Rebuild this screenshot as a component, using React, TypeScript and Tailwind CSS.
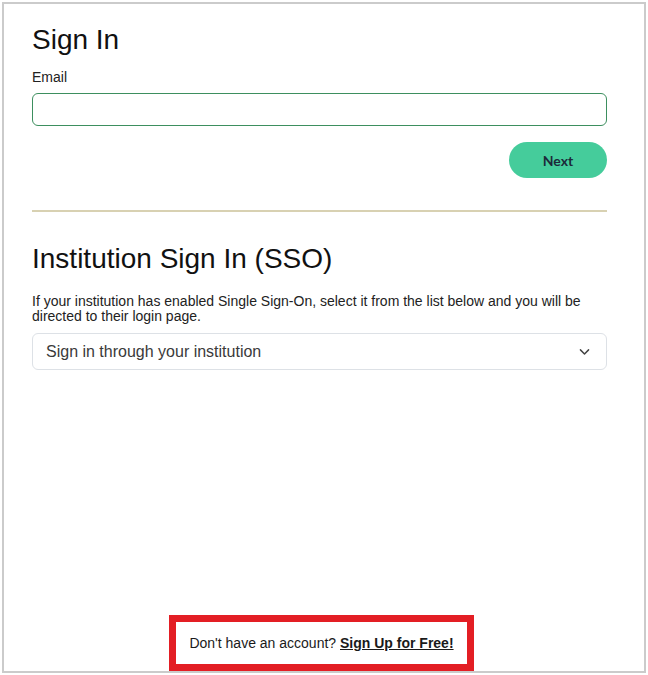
import React from "react";

export default function App() {
    return (
        <div className="w-[648px] h-[675px] bg-white p-[2px] font-['Liberation_Sans',Arial,sans-serif] text-[#1a1a1a]">
            <div className="flex h-[671px] flex-col border-2 border-[#cbcbcb] pl-[28px] pt-[20px]">
                <div className="flex w-[575px] flex-1 flex-col">
                    {/* Sign in */}
                    <h1 className="text-[28px] leading-[32px] text-[#111]">Sign In</h1>
                    <label className="mt-[11px] text-[14px] leading-[20px] text-[#222]">Email</label>
                    <input
                        type="email"
                        className="mt-[6px] h-[33px] w-full rounded-[6px] border border-[#3d8f5f] px-3 text-[14px] outline-none"
                    />
                    <div className="mt-[16px] flex justify-end">
                        <button className="h-[36px] w-[98px] rounded-full bg-[#45cc9b] font-['Lato',sans-serif] text-[14px] font-bold text-[#1c2a3a]">
                            Next
                        </button>
                    </div>

                    <div className="mt-[32px] h-[2px] w-full bg-[#d8d1b2]" />

                    {/* SSO */}
                    <h2 className="mt-[31px] text-[28px] leading-[32px] text-[#111]">
                        Institution Sign In (SSO)
                    </h2>
                    <p className="mt-[19px] text-[14px] leading-[15px] text-[#222]">
                        If your institution has enabled Single Sign-On, select it from the list below and you will be directed to their login page.
                    </p>
                    <button className="mt-[9px] flex h-[37px] w-full items-center justify-between rounded-[6px] border border-[#dde1e6] pl-[13px] pr-[15px] text-left text-[16px] text-[#3a3a3a]">
                        <span>Sign in through your institution</span>
                        <svg width="13" height="13" viewBox="0 0 16 16" fill="none" stroke="#444" strokeWidth="1.8" strokeLinecap="round" strokeLinejoin="round">
                            <path d="M3 6l5 5 5-5" />
                        </svg>
                    </button>

                    {/* Footer */}
                    <div className="mt-auto flex justify-center pl-[4px]">
                        <div className="flex h-[56px] w-[305px] items-center justify-center border-[7px] border-[#e31e24] text-[14px] text-[#1a1a1a]">
                            <span>
                                Don't have an account?{" "}
                                <a href="#" className="font-bold underline">
                                    Sign Up for Free!
                                </a>
                            </span>
                        </div>
                    </div>
                </div>
            </div>
        </div>
    );
}
